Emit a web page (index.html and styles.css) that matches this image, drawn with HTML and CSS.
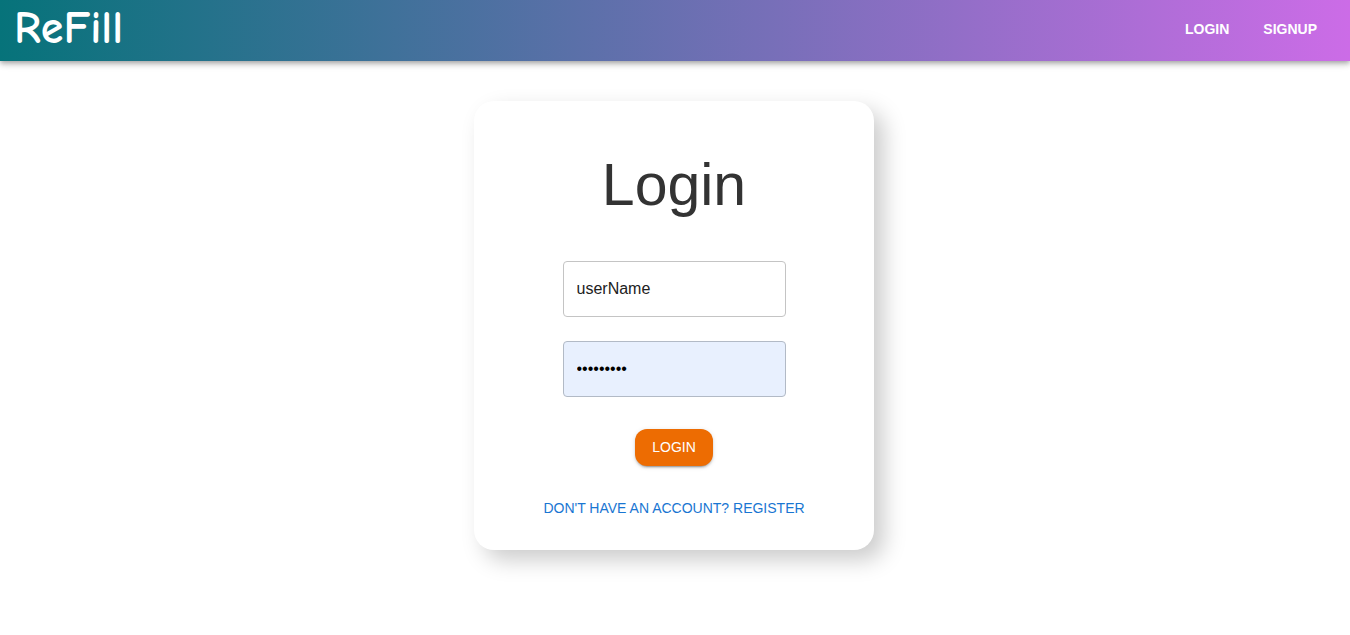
FILE: index.html
```html
<!DOCTYPE html>
<html lang="en">
<head>
<meta charset="utf-8">
<title>ReFill</title>
<link rel="stylesheet" href="styles.css">
</head>
<body>
<header class="bar">
  <a class="brand" href="#">ReFill</a>
  <nav class="nav">
    <a class="nav-link" href="#">LOGIN</a>
    <a class="nav-link" href="#">SIGNUP</a>
  </nav>
</header>
<main class="page">
  <form class="card">
    <h1 class="title">Login</h1>
    <input class="field" type="text" aria-label="User name" value="userName">
    <input class="field field-filled" type="password" aria-label="Password" value="password1">
    <button class="submit" type="button">LOGIN</button>
    <a class="register" href="#">DON'T HAVE AN ACCOUNT? REGISTER</a>
  </form>
</main>
</body>
</html>
```
FILE: styles.css
```css
* { box-sizing: border-box; }
body {
  margin: 0;
  background: #fff;
  font-family: "Liberation Sans", Arial, sans-serif;
}
.bar {
  display: flex;
  align-items: center;
  justify-content: space-between;
  padding: 0 16px 3px 14px;
  background: linear-gradient(90deg, #06737a, #cc6ce7);
  box-shadow: 0 2px 4px -1px rgba(0,0,0,.2), 0 4px 5px rgba(0,0,0,.14), 0 1px 10px rgba(0,0,0,.12);
}
.brand {
  color: #fff;
  font-family: "Comic Sans MS", "Comic Neue", Lato, sans-serif;
  font-size: 46px;
  font-weight: 700;
  line-height: 58px;
  text-decoration: none;
}
.nav { display: flex; }
.nav-link {
  padding: 0 17px;
  color: #fff;
  font-size: 14px;
  font-weight: 700;
  line-height: 24px;
  text-decoration: none;
}
.page {
  display: flex;
  justify-content: center;
  padding: 40px 18px 40px 16px;
}
.card {
  display: flex;
  flex-direction: column;
  align-items: center;
  width: 100%;
  max-width: 400px;
  padding: 48px 24px 30px;
  border-radius: 20px;
  background: #fff;
  box-shadow: 10px 10px 22px #ccc;
}
.title {
  margin: 0 0 40px;
  color: #333;
  font-size: 59px;
  font-weight: 400;
  line-height: 72px;
}
.field {
  width: 223px;
  height: 56px;
  margin-bottom: 24px;
  padding: 0 13px;
  border: 1px solid #c4c4c4;
  border-radius: 4px;
  background: #fff;
  color: #212121;
  font-family: inherit;
  font-size: 16px;
}
.field-filled {
  border-color: #b2bac6;
  background: #e8f0fe;
  color: #000;
}
.submit {
  margin: 8px 0 30px;
  padding: 6px 17px;
  border: 0;
  border-radius: 12px;
  background: #ed6c02;
  box-shadow: 0 3px 1px -2px rgba(0,0,0,.2), 0 2px 2px rgba(0,0,0,.14), 0 1px 5px rgba(0,0,0,.12);
  color: #fff;
  font-family: inherit;
  font-size: 14px;
  line-height: 25px;
}
.register {
  color: #1976d2;
  font-size: 14px;
  line-height: 24px;
  text-decoration: none;
}
```
